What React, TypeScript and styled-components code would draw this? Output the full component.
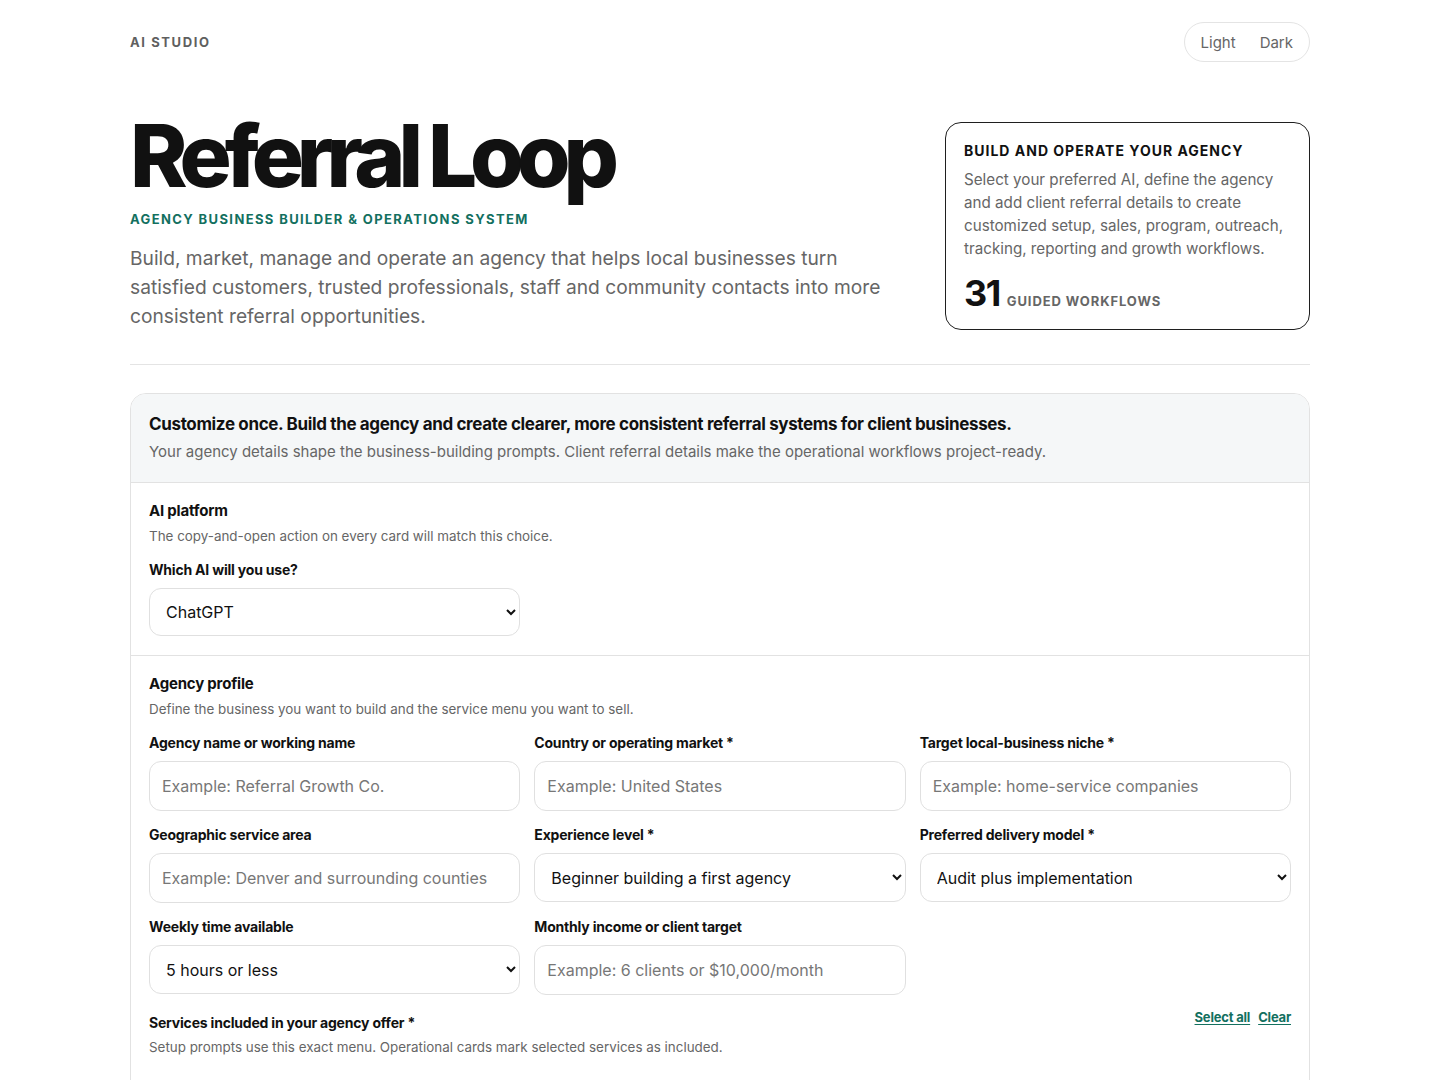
import styled, { createGlobalStyle } from "styled-components";

const GlobalStyle = createGlobalStyle`
  * { box-sizing: border-box; }
  body {
    margin: 0;
    background: #ffffff;
    color: #111111;
    font-family: Inter, "Noto Sans", "Liberation Sans", sans-serif;
  }
`;

const Page = styled.div`
  width: 1180px;
  margin: 0 auto;
  padding: 22px 0 60px;
`;

const TopBar = styled.header`
  display: flex;
  align-items: center;
  justify-content: space-between;
  height: 40px;
`;

const Brand = styled.div`
  font-size: 13px;
  font-weight: 700;
  letter-spacing: 1.6px;
  color: #5f5f5f;
`;

const Toggle = styled.div`
  display: flex;
  align-items: center;
  height: 40px;
  padding: 0 4px;
  border: 1px solid #e4e4e4;
  border-radius: 20px;
`;

const ToggleOption = styled.button`
  border: 0;
  background: transparent;
  font-family: inherit;
  font-size: 15px;
  color: #666666;
  padding: 0 12px;
  height: 32px;
  cursor: pointer;
`;

const Hero = styled.section`
  display: grid;
  grid-template-columns: 1fr 365px;
  gap: 55px;
  align-items: end;
  margin-top: 50px;
  padding-bottom: 33px;
  border-bottom: 1px solid #e4e4e4;
`;

const HeroText = styled.div`
  display: flex;
  flex-direction: column;
`;

const Title = styled.h1`
  margin: 0;
  font-size: 87px;
  line-height: 1;
  font-weight: 800;
  letter-spacing: -7.1px;
  color: #111111;
`;

const Kicker = styled.div`
  margin-top: 12px;
  font-size: 13px;
  line-height: 16px;
  font-weight: 700;
  letter-spacing: 1.38px;
  color: #13705f;
`;

const Lead = styled.p`
  margin: 17px 0 0;
  font-size: 19.2px;
  line-height: 29px;
  color: #666666;
`;

const InfoCard = styled.aside`
  border: 1px solid #1f1f1f;
  border-radius: 16px;
  padding: 19px 18px 18px;
  margin-bottom: 1px;
`;

const InfoTitle = styled.div`
  font-size: 14px;
  line-height: 18px;
  font-weight: 700;
  letter-spacing: 1px;
  color: #111111;
`;

const InfoText = styled.p`
  margin: 8px 0 0;
  font-size: 15.2px;
  line-height: 23px;
  color: #666666;
`;

const Stat = styled.div`
  display: flex;
  align-items: baseline;
  gap: 7px;
  margin-top: 15px;
`;

const StatNumber = styled.span`
  font-size: 36px;
  line-height: 1;
  font-weight: 700;
  letter-spacing: -1.5px;
  color: #111111;
`;

const StatLabel = styled.span`
  font-size: 13px;
  font-weight: 700;
  letter-spacing: 0.9px;
  color: #666666;
`;

const Panel = styled.section`
  margin-top: 28px;
  border: 1px solid #e2e2e2;
  border-radius: 16px;
  overflow: hidden;
`;

const PanelHead = styled.div`
  background: #f5f7f8;
  padding: 18px 18px 19px;
  border-bottom: 1px solid #e2e2e2;
`;

const PanelTitle = styled.h2`
  margin: 0;
  font-size: 17px;
  line-height: 24px;
  font-weight: 700;
  letter-spacing: -0.35px;
  color: #111111;
`;

const PanelSub = styled.p`
  margin: 5px 0 0;
  font-size: 15px;
  line-height: 22px;
  color: #666666;
`;

const Section = styled.div<{ $last?: boolean }>`
  padding: 18px 18px ${(p) => (p.$last ? "80px" : "19px")};
  border-bottom: ${(p) => (p.$last ? "0" : "1px solid #e2e2e2")};
`;

const SectionHead = styled.div`
  display: flex;
  justify-content: space-between;
  align-items: flex-start;
  margin-top: 17px;
`;

const SectionTitle = styled.h3`
  margin: 0;
  font-size: 15px;
  line-height: 20px;
  font-weight: 700;
  letter-spacing: -0.2px;
  color: #111111;
`;

const SectionDesc = styled.p`
  margin: 6px 0 0;
  font-size: 13.4px;
  line-height: 18px;
  color: #666666;
`;

const Grid = styled.div`
  display: grid;
  grid-template-columns: repeat(3, 1fr);
  column-gap: 14px;
  row-gap: 15px;
  margin-top: 16px;
`;

const Field = styled.label`
  display: flex;
  flex-direction: column;
  gap: 9px;
`;

const FieldLabel = styled.span`
  font-size: 14px;
  line-height: 18px;
  font-weight: 700;
  letter-spacing: -0.2px;
  color: #111111;
`;

const TextInput = styled.input`
  height: 50px;
  padding: 0 12px;
  border: 1px solid #e0e0e0;
  border-radius: 12px;
  font-family: inherit;
  font-size: 16px;
  color: #111111;
  background: #ffffff;
  &::placeholder {
    color: #777777;
  }
`;

const Select = styled.select<{ $height?: number }>`
  height: ${(p) => p.$height ?? 49}px;
  padding: 0 10px 0 12px;
  border: 1px solid #e0e0e0;
  border-radius: 12px;
  font-family: inherit;
  font-size: 16px;
  color: #111111;
  background: #ffffff;
`;

const LinkRow = styled.div`
  display: flex;
  gap: 8px;
  margin-top: -3px;
`;

const TextLink = styled.a`
  font-size: 13px;
  font-weight: 700;
  letter-spacing: -0.2px;
  color: #13705f;
  text-decoration: underline;
  text-underline-offset: 2px;
  cursor: pointer;
`;

export default function App() {
  return (
    <>
      <GlobalStyle />
      <Page>
        <TopBar>
          <Brand>AI STUDIO</Brand>
          <Toggle>
            <ToggleOption>Light</ToggleOption>
            <ToggleOption>Dark</ToggleOption>
          </Toggle>
        </TopBar>

        <Hero>
          <HeroText>
            <Title>Referral Loop</Title>
            <Kicker>AGENCY BUSINESS BUILDER &amp; OPERATIONS SYSTEM</Kicker>
            <Lead>
              Build, market, manage and operate an agency that helps local businesses turn
              satisfied customers, trusted professionals, staff and community contacts into more
              consistent referral opportunities.
            </Lead>
          </HeroText>
          <InfoCard>
            <InfoTitle>BUILD AND OPERATE YOUR AGENCY</InfoTitle>
            <InfoText>
              Select your preferred AI, define the agency and add client referral details to
              create customized setup, sales, program, outreach, tracking, reporting and growth
              workflows.
            </InfoText>
            <Stat>
              <StatNumber>31</StatNumber>
              <StatLabel>GUIDED WORKFLOWS</StatLabel>
            </Stat>
          </InfoCard>
        </Hero>

        <Panel>
          <PanelHead>
            <PanelTitle>
              Customize once. Build the agency and create clearer, more consistent referral
              systems for client businesses.
            </PanelTitle>
            <PanelSub>
              Your agency details shape the business-building prompts. Client referral details
              make the operational workflows project-ready.
            </PanelSub>
          </PanelHead>

          <Section>
            <SectionTitle>AI platform</SectionTitle>
            <SectionDesc>The copy-and-open action on every card will match this choice.</SectionDesc>
            <Grid>
              <Field>
                <FieldLabel>Which AI will you use?</FieldLabel>
                <Select $height={48} defaultValue="ChatGPT">
                  <option>ChatGPT</option>
                  <option>Claude</option>
                  <option>Gemini</option>
                  <option>Copilot</option>
                </Select>
              </Field>
            </Grid>
          </Section>

          <Section $last>
            <SectionTitle>Agency profile</SectionTitle>
            <SectionDesc>
              Define the business you want to build and the service menu you want to sell.
            </SectionDesc>
            <Grid>
              <Field>
                <FieldLabel>Agency name or working name</FieldLabel>
                <TextInput placeholder="Example: Referral Growth Co." />
              </Field>
              <Field>
                <FieldLabel>Country or operating market *</FieldLabel>
                <TextInput placeholder="Example: United States" />
              </Field>
              <Field>
                <FieldLabel>Target local-business niche *</FieldLabel>
                <TextInput placeholder="Example: home-service companies" />
              </Field>
              <Field>
                <FieldLabel>Geographic service area</FieldLabel>
                <TextInput placeholder="Example: Denver and surrounding counties" />
              </Field>
              <Field>
                <FieldLabel>Experience level *</FieldLabel>
                <Select defaultValue="Beginner building a first agency">
                  <option>Beginner building a first agency</option>
                  <option>Some freelance experience</option>
                  <option>Established agency</option>
                </Select>
              </Field>
              <Field>
                <FieldLabel>Preferred delivery model *</FieldLabel>
                <Select defaultValue="Audit plus implementation">
                  <option>Audit plus implementation</option>
                  <option>Done-for-you management</option>
                  <option>Consulting only</option>
                </Select>
              </Field>
              <Field>
                <FieldLabel>Weekly time available</FieldLabel>
                <Select defaultValue="5 hours or less">
                  <option>5 hours or less</option>
                  <option>5 to 15 hours</option>
                  <option>15 to 30 hours</option>
                  <option>Full time</option>
                </Select>
              </Field>
              <Field>
                <FieldLabel>Monthly income or client target</FieldLabel>
                <TextInput placeholder="Example: 6 clients or $10,000/month" />
              </Field>
            </Grid>

            <SectionHead>
              <div>
                <FieldLabel>Services included in your agency offer *</FieldLabel>
                <SectionDesc>
                  Setup prompts use this exact menu. Operational cards mark selected services as
                  included.
                </SectionDesc>
              </div>
              <LinkRow>
                <TextLink>Select all</TextLink>
                <TextLink>Clear</TextLink>
              </LinkRow>
            </SectionHead>
          </Section>
        </Panel>
      </Page>
    </>
  );
}
